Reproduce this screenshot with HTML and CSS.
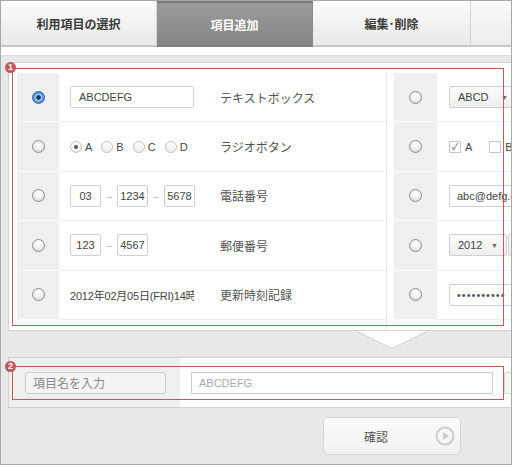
FILE: index.html
```html
<!DOCTYPE html>
<html lang="ja">
<head>
    <meta charset="UTF-8">
    <meta name="viewport" content="width=device-width, initial-scale=1.0">
    <title>項目追加</title>
    <link rel="stylesheet" href="styles.css">
</head>
<body>
    <div class="frame">
        <div class="tabs">
            <div class="tab">利用項目の選択</div>
            <div class="tab active">項目追加</div>
            <div class="tab tab-wide">編集･削除</div>
            <div class="tab tab-rest"></div>
        </div>
        <div class="tab-gap"></div>
        <div class="content">
            <div class="panel panel-items">
                <span class="mark mark-1">1</span>
                <span class="red-box red-1"></span>

                <div class="item-table">
                    <div class="item-row">
                        <div class="cell-radio"><span class="radio on"></span></div>
                        <div class="cell-field"><span class="box box-text">ABCDEFG</span></div>
                        <div class="cell-label">テキストボックス</div>
                    </div>
                    <div class="item-row">
                        <div class="cell-radio"><span class="radio"></span></div>
                        <div class="cell-field">
                            <span class="opt"><span class="opt-radio on"></span>A</span>
                            <span class="opt"><span class="opt-radio"></span>B</span>
                            <span class="opt"><span class="opt-radio"></span>C</span>
                            <span class="opt"><span class="opt-radio"></span>D</span>
                        </div>
                        <div class="cell-label">ラジオボタン</div>
                    </div>
                    <div class="item-row">
                        <div class="cell-radio"><span class="radio"></span></div>
                        <div class="cell-field">
                            <span class="box box-num">03</span><span class="dash">–</span>
                            <span class="box box-num">1234</span><span class="dash">–</span>
                            <span class="box box-num">5678</span>
                        </div>
                        <div class="cell-label">電話番号</div>
                    </div>
                    <div class="item-row">
                        <div class="cell-radio"><span class="radio"></span></div>
                        <div class="cell-field">
                            <span class="box box-num">123</span><span class="dash">–</span>
                            <span class="box box-num">4567</span>
                        </div>
                        <div class="cell-label">郵便番号</div>
                    </div>
                    <div class="item-row">
                        <div class="cell-radio"><span class="radio"></span></div>
                        <div class="cell-field"><span class="stamp">2012年02月05日(FRI)14時30分</span></div>
                        <div class="cell-label">更新時刻記録</div>
                    </div>
                </div>

                <div class="item-table item-table-right">
                    <div class="item-row">
                        <div class="cell-radio"><span class="radio"></span></div>
                        <div class="cell-field"><span class="box select select-wide">ABCD<span class="caret">▼</span></span></div>
                    </div>
                    <div class="item-row">
                        <div class="cell-radio"><span class="radio"></span></div>
                        <div class="cell-field">
                            <span class="opt"><span class="check on">✓</span>A</span>
                            <span class="opt"><span class="check"></span>B</span>
                        </div>
                    </div>
                    <div class="item-row">
                        <div class="cell-radio"><span class="radio"></span></div>
                        <div class="cell-field"><span class="box box-long">abc@defg.com</span></div>
                    </div>
                    <div class="item-row">
                        <div class="cell-radio"><span class="radio"></span></div>
                        <div class="cell-field">
                            <span class="box select">2012<span class="caret">▼</span></span>
                            <span class="box select">02<span class="caret">▼</span></span>
                        </div>
                    </div>
                    <div class="item-row">
                        <div class="cell-radio"><span class="radio"></span></div>
                        <div class="cell-field"><span class="box box-long box-pass">••••••••••</span></div>
                    </div>
                </div>

                <svg class="pointer" width="70" height="18" viewBox="0 0 70 18">
                    <path d="M0 0 L70 0 L35 17.5 Z" fill="#fff"/>
                    <rect x="0" y="0" width="70" height="1.2" fill="#fff"/>
                    <path d="M0 0.5 L35 17.5 L70 0.5" fill="none" stroke="#cfcfcf" stroke-width="1"/>
                </svg>
            </div>

            <div class="panel panel-name">
                <span class="mark mark-2">2</span>
                <span class="red-box red-2"></span>
                <div class="name-side"><span class="name-input">項目名を入力</span></div>
                <div class="name-main">
                    <span class="value-input">ABCDEFG</span>
                    <span class="value-next"></span>
                </div>
            </div>

            <div class="actions">
                <button class="btn-ok">確認
                    <svg class="btn-icon" width="20" height="20" viewBox="0 0 20 20">
                        <circle cx="10" cy="10" r="8.5" fill="none" stroke="#cdcdcd" stroke-width="2"/>
                        <path d="M8 6 L14 10 L8 14 Z" fill="#cdcdcd"/>
                    </svg>
                </button>
            </div>
        </div>
    </div>
</body>
</html>
```

FILE: styles.css
```css
*{margin:0;padding:0;box-sizing:border-box}
body{background:#fff;font-family:'Liberation Sans','Noto Sans CJK JP',sans-serif;color:#444}
.frame{width:512px;height:465px;border:1px solid #a8a8a8;overflow:hidden;display:flex;flex-direction:column;background:#e8e8e8}

.tabs{display:flex;height:46px;flex:none}
.tab{width:156px;flex:none;display:flex;align-items:center;justify-content:center;font-family:'Noto Sans CJK JP',sans-serif;font-size:12px;font-weight:bold;color:#3a3a3a;background:linear-gradient(#fbfbfb,#e9e9e9);border-right:1px solid #d4d4d4;border-bottom:2px solid #c6c6c6;padding-top:1px}
.tab.active{background:linear-gradient(#9b9b9b,#858585);color:#fff;border-top:2px solid #7a7a7a;border-bottom:2px solid #808080;border-right:1px solid #8a8a8a}
.tab-wide{width:158px}
.tab-rest{flex:1;width:auto;border-right:none;background:linear-gradient(#f9f9f9,#ececec)}
.tab-gap{height:9px;flex:none;background:#fff;border-bottom:1px solid #dadada}

.content{flex:1;padding:6px 0 0 7px}
.panel{position:relative;width:560px;background:#fff;border:1px solid #d2d2d2}
.panel-items{height:269px;display:flex;gap:7px;padding:10px 0 0 8px}

.mark{position:absolute;width:11px;height:11px;border-radius:50%;background:#c4575a;color:#fff;font-size:9px;font-weight:bold;line-height:11px;text-align:center;z-index:2}
.mark-1{left:-4px;top:-1px}
.mark-2{left:-4px;top:3px}
.red-box{position:absolute;border:1px solid #c4585a;z-index:1;pointer-events:none}
.red-1{left:3px;top:5px;width:492px;height:258px}
.red-2{left:3px;top:8px;width:492px;height:34px}

.item-table{width:370px;flex:none;border-right:1px solid #e6e6e6}
.item-table-right{width:160px;border-right:none}
.item-row{display:flex;height:49.4px}
.cell-radio{width:42px;flex:none;background:#efefef;border-bottom:1px solid #fafafa;display:flex;align-items:center;justify-content:center}
.item-table-right .cell-radio{width:43px}
.cell-field{width:161px;flex:none;display:flex;align-items:center;padding-left:11px;border-bottom:1px solid #ececec;font-size:11px;overflow:hidden;white-space:nowrap}
.item-table-right .cell-field{flex:1;width:auto;padding-left:12px}
.cell-label{flex:1;display:flex;align-items:center;font-family:'Noto Sans CJK JP',sans-serif;font-size:12px;color:#555;border-bottom:1px solid #ececec}

.radio{width:13px;height:13px;border-radius:50%;border:1px solid #8e8e8e;background:radial-gradient(circle at 50% 35%,#fff 0,#f2f2f2 45%,#c9c9c9 100%)}
.radio.on{border-color:#2f62a0;background:radial-gradient(circle,#1a3a64 0,#1a3a64 2px,#bfe0ff 2.6px,#5ea4ec 4px,#2d74cc 100%)}

.box{height:22px;border:1px solid #cfcfcf;border-radius:2px;background:#fff;display:flex;align-items:center;color:#444;font-size:11px;flex:none}
.box-text{width:124px;padding-left:8px}
.box-num{width:31px;justify-content:center}
.dash{width:16px;text-align:center;color:#c4c4c4;font-size:11px;flex:none}
.stamp{display:block;width:124px;overflow:hidden;font-size:11px;color:#444;letter-spacing:-.2px}

.opt{display:flex;align-items:center;margin-right:9px;font-size:11px;color:#444}
.opt-radio{width:12px;height:12px;border-radius:50%;border:1px solid #c2c2c2;background:linear-gradient(#fff,#ececec);margin-right:3px;position:relative}
.opt-radio.on::after{content:'';position:absolute;left:3px;top:3px;width:4px;height:4px;border-radius:50%;background:#555}
.check{width:12px;height:12px;border:1px solid #c6c6c6;background:#fff;margin-right:4px;font-size:9px;line-height:10px;text-align:center;color:#555}
.item-table-right .opt{margin-right:17px}

.select{width:58px;padding:0 8px;background:linear-gradient(#fbfbfb,#eeeeee);margin-right:1px}
.select-wide{width:68px}
.caret{margin-left:auto;font-size:7px;color:#666}
.box-long{width:120px;padding-left:7px}
.box-pass{letter-spacing:1px;color:#555}

.pointer{position:absolute;left:348px;bottom:-19px}

.panel-name{margin-top:26px;height:51px;display:flex}
.name-side{width:171px;flex:none;background:#efefef;display:flex;align-items:center;padding-left:16px}
.name-input{width:141px;height:22px;border:1px solid #cccccc;border-radius:3px;background:#f4f4f4;font-family:'Noto Sans CJK JP',sans-serif;font-size:12px;color:#8a8a8a;display:flex;align-items:center;padding-left:7px}
.name-main{flex:1;display:flex;align-items:center;padding-left:11px;gap:11px}
.value-input{width:302px;height:22px;border:1px solid #cccccc;background:#fff;font-size:11px;color:#aaa;display:flex;align-items:center;padding-left:7px}
.value-next{width:40px;height:22px;border:1px solid #d6d6d6;border-radius:2px;background:#f6f6f6}

.actions{display:flex;justify-content:flex-end;padding:9px 50px 0 0}
.btn-ok{width:138px;height:38px;border:1px solid #d6d6d6;border-radius:5px;background:linear-gradient(#fafafa,#f1f1f1);display:flex;align-items:center;padding:0 5px 0 40px;font-family:'Noto Sans CJK JP',sans-serif;font-size:12px;color:#555;cursor:pointer}
.btn-icon{margin-left:auto}
```
